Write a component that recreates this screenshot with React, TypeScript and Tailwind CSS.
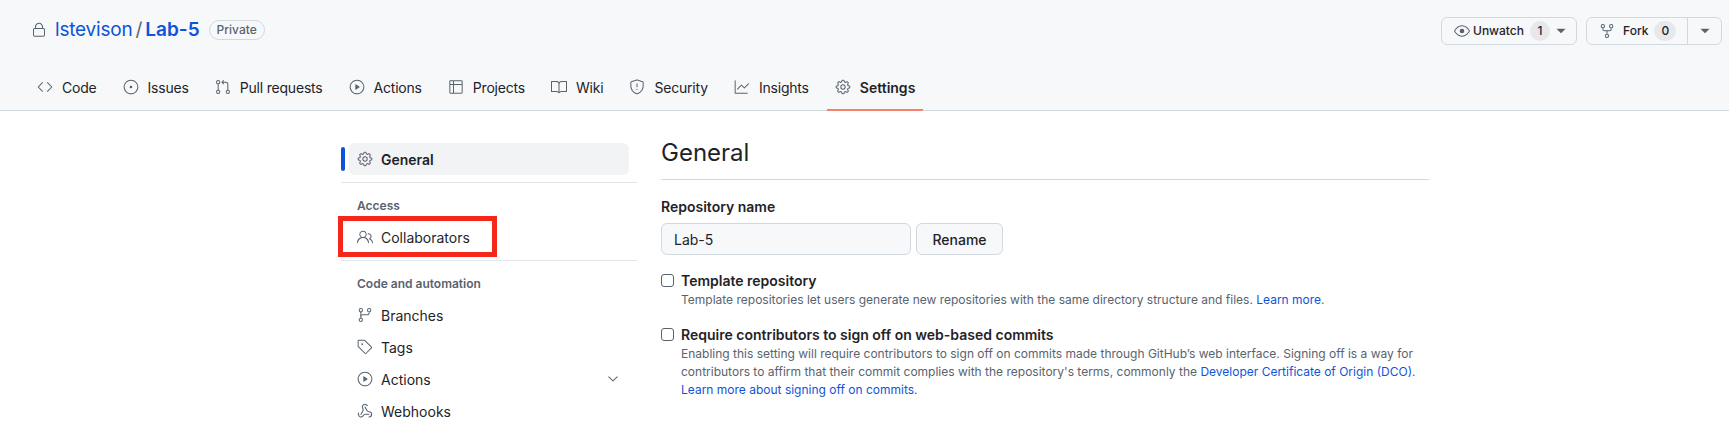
import React from "react";
import {
  GoLock, GoEye, GoRepoForked, GoTriangleDown, GoCode, GoIssueOpened, GoGitPullRequest, GoPlay, GoTable,
  GoBook, GoShield, GoGraph, GoGear, GoPeople, GoGitBranch, GoTag, GoChevronDown,
} from "react-icons/go";
import { Webhook } from "lucide-react";

const tabs: [React.ElementType, string, boolean?][] = [
  [GoCode, "Code"],
  [GoIssueOpened, "Issues"],
  [GoGitPullRequest, "Pull requests"],
  [GoPlay, "Actions"],
  [GoTable, "Projects"],
  [GoBook, "Wiki"],
  [GoShield, "Security"],
  [GoGraph, "Insights"],
  [GoGear, "Settings", true],
];

function WebhookIcon({ className }: { className?: string }) {
  return <Webhook className={className} strokeWidth={1.6} />;
}

function SideItem({ icon: Icon, label, chevron }: { icon: React.ElementType; label: string; chevron?: boolean }) {
  return (
    <div className="flex h-8 items-center mx-2 px-2 gap-2 text-[14px] text-[#1f2328]">
      <Icon className="w-4 h-4 text-[#59636e] shrink-0" />
      <span>{label}</span>
      {chevron && <GoChevronDown className="w-4 h-4 ml-auto text-[#59636e]" />}
    </div>
  );
}

export default function App() {
  return (
    <div className="w-[1729px] h-[431px] overflow-hidden bg-white font-['Inter',sans-serif] text-[#1f2328]">
      <header className="h-[111px] bg-[#f6f8fa] border-b border-[#d1d9e0] flex flex-col">
        <div className="flex justify-between pt-[17px] pl-[31px] pr-[7px] h-[61px]">
          <div className="flex items-center h-[26px]">
            <GoLock className="w-4 h-4 text-[#59636e] mr-[8px]" />
            <span className="text-[19px] tracking-[-0.2px] text-[#0f54d8]">lstevison</span>
            <span className="text-[19px] text-[#59636e] mx-[3px]">/</span>
            <span className="text-[19px] font-semibold text-[#0f54d8]">Lab-5</span>
            <span className="ml-[9px] w-[56px] h-[20px] flex items-center justify-center rounded-full border border-[#d1d9e0] text-[12px] font-medium text-[#59636e]">Private</span>
          </div>
          <div className="flex gap-[9px] h-[28px] text-[12px] font-medium">
            <div className="w-[136px] flex items-center pl-[12px] border border-[#d1d9e0] rounded-md">
              <GoEye className="w-4 h-4 text-[#59636e]" />
              <span className="ml-[3px]">Unwatch</span>
              <span className="ml-[6px] w-5 h-5 rounded-full bg-[#e6e8eb] flex items-center justify-center">1</span>
              <GoTriangleDown className="w-4 h-4 ml-[3px] text-[#59636e]" />
            </div>
            <div className="w-[136px] flex items-center border border-[#d1d9e0] rounded-md">
              <div className="flex items-center flex-1 h-full pl-[12px] border-r border-[#d1d9e0]">
                <GoRepoForked className="w-4 h-4 text-[#59636e]" />
                <span className="ml-[8px]">Fork</span>
                <span className="ml-[6px] w-[22px] h-5 rounded-full bg-[#e6e8eb] flex items-center justify-center">0</span>
              </div>
              <div className="w-[33px] flex items-center justify-center">
                <GoTriangleDown className="w-4 h-4 text-[#59636e]" />
              </div>
            </div>
          </div>
        </div>
        <nav className="flex pl-[29px] h-[49px] gap-[10px] text-[14px]">
          {tabs.map(([Icon, label, active]) => (
            <div key={label} className={`relative flex items-center gap-[9px] px-[8px] h-full pt-[3px] ${active ? "font-semibold" : "tracking-[-0.2px]"}`}>
              <Icon className="w-4 h-4 text-[#59636e]" />
              <span>{label}</span>
              {active && <span className="absolute left-0 right-0 -bottom-[1px] h-[2px] bg-[#f5806a]" />}
            </div>
          ))}
        </nav>
      </header>

      <div className="flex pl-[341px] pt-[32px]">
        <aside className="w-[296px] shrink-0 relative">
          <div className="relative h-8 flex items-center mx-2 px-2 gap-2 rounded-md bg-[#f2f3f5] text-[14px] font-semibold">
            <span className="absolute -left-2 top-1 w-1 h-6 rounded-md bg-[#0f54d8]" />
            <GoGear className="w-4 h-4 text-[#59636e]" />
            <span>General</span>
          </div>
          <div className="mt-[7px] border-t border-[#e3e6ea]" />
          <div className="mt-[15px] pl-4 h-[16px] text-[12px] leading-[16px] font-semibold text-[#59636e]">Access</div>
          <div className="mt-[7px]">
            <SideItem icon={GoPeople} label="Collaborators" />
          </div>
          <div className="absolute left-[-3px] top-[73px] w-[159px] h-[41px] border-[5px] border-[#f5261a]" />
          <div className="mt-[7px] border-t border-[#e3e6ea]" />
          <div className="mt-[15px] pl-4 h-[16px] text-[12px] leading-[16px] font-semibold text-[#59636e]">Code and automation</div>
          <div className="mt-[7px]">
            <SideItem icon={GoGitBranch} label="Branches" />
            <SideItem icon={GoTag} label="Tags" />
            <SideItem icon={GoPlay} label="Actions" chevron />
            <SideItem icon={WebhookIcon} label="Webhooks" />
          </div>
        </aside>
        <main className="ml-[24px] w-[768px]">
          <h1 className="text-[24px] leading-[36px] font-normal border-b border-[#d1d9e0] h-[45px] -mt-[8px]">General</h1>
          <label className="block mt-[17px] text-[14px] leading-[20px] font-semibold">Repository name</label>
          <div className="flex gap-[5px] mt-[6px]">
            <div className="w-[250px] h-8 rounded-md border border-[#d1d9e0] bg-[#f6f8fa] flex items-center px-3 text-[14px]">Lab-5</div>
            <div className="w-[87px] h-8 rounded-md border border-[#d1d9e0] bg-[#f6f8fa] flex items-center justify-center text-[14px] font-medium">Rename</div>
          </div>
          <div className="flex mt-[16px]">
            <span className="w-[13px] h-[13px] mt-[3px] rounded-[3px] border border-[#59636e] bg-white shrink-0" />
            <div className="ml-[7px]">
              <div className="text-[14px] leading-[20px] font-semibold">Template repository</div>
              <p className="text-[12px] leading-[18px] text-[#59636e]">
                Template repositories let users generate new repositories with the same directory structure and files. <span className="text-[#0f54d8]">Learn more</span>.
              </p>
            </div>
          </div>
          <div className="flex mt-[16px]">
            <span className="w-[13px] h-[13px] mt-[3px] rounded-[3px] border border-[#59636e] bg-white shrink-0" />
            <div className="ml-[7px]">
              <div className="text-[14px] leading-[20px] font-semibold">Require contributors to sign off on web-based commits</div>
              <p className="text-[12px] leading-[18px] text-[#59636e]">
                Enabling this setting will require contributors to sign off on commits made through GitHub’s web interface. Signing off is a way for contributors to affirm that their commit complies with the repository's terms, commonly the <span className="text-[#0f54d8]">Developer Certificate of Origin (DCO)</span>. <span className="text-[#0f54d8]">Learn more about signing off on commits</span>.
              </p>
            </div>
          </div>
        </main>
      </div>
    </div>
  );
}
